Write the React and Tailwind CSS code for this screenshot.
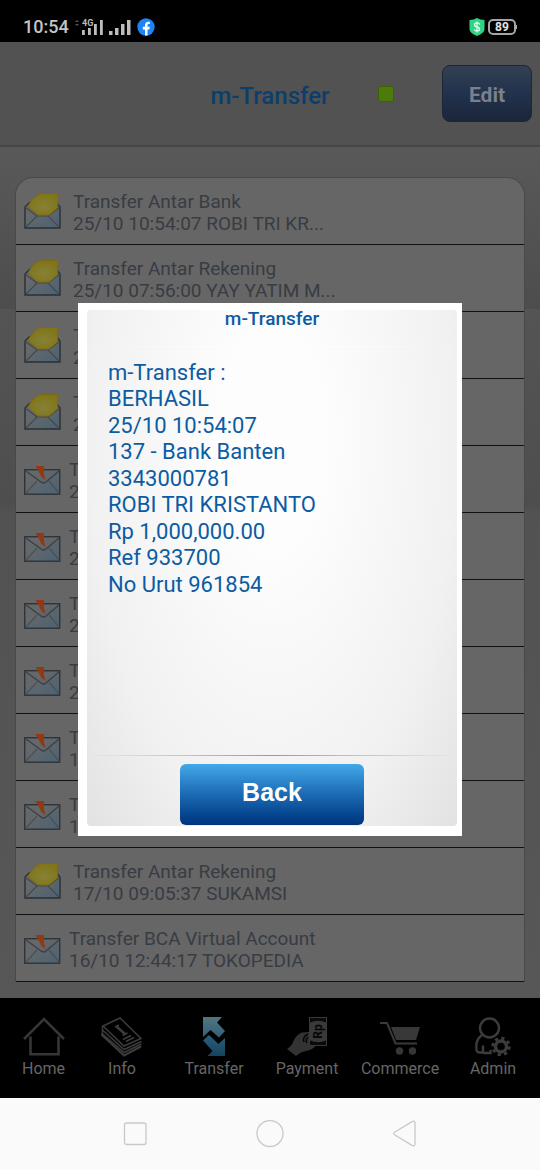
import clsx from 'clsx'

const TRANSACTIONS = [
  { id: 1, opened: true, title: 'Transfer Antar Bank', detail: '25/10 10:54:07 ROBI TRI KR...' },
  { id: 2, opened: true, title: 'Transfer Antar Rekening', detail: '25/10 07:56:00 YAY YATIM M...' },
  { id: 3, opened: true, title: 'Tr', detail: '24' },
  { id: 4, opened: true, title: 'Tr', detail: '23' },
  { id: 5, opened: false, title: 'Tr', detail: '22' },
  { id: 6, opened: false, title: 'Tr', detail: '22' },
  { id: 7, opened: false, title: 'Tr', detail: '21' },
  { id: 8, opened: false, title: 'Tr', detail: '20' },
  { id: 9, opened: false, title: 'Tr', detail: '19' },
  { id: 10, opened: false, title: 'Tr', detail: '18' },
  { id: 11, opened: true, title: 'Transfer Antar Rekening', detail: '17/10 09:05:37 SUKAMSI' },
  { id: 12, opened: false, title: 'Transfer BCA Virtual Account', detail: '16/10 12:44:17 TOKOPEDIA' },
]

const RECEIPT = [
  'm-Transfer :',
  'BERHASIL',
  '25/10 10:54:07',
  '137 - Bank Banten',
  '3343000781',
  'ROBI TRI KRISTANTO',
  'Rp 1,000,000.00',
  'Ref 933700',
  'No Urut 961854',
]

const TABS = [
  { label: 'Home', Icon: HomeIcon },
  { label: 'Info', Icon: InfoIcon },
  { label: 'Transfer', Icon: TransferIcon },
  { label: 'Payment', Icon: PaymentIcon },
  { label: 'Commerce', Icon: CommerceIcon },
  { label: 'Admin', Icon: AdminIcon },
]

/* ---- Tab bar icons ---- */

function HomeIcon() {
  return (
    <svg width="42" height="40" viewBox="0 0 42 40" fill="none" stroke="#363636" strokeWidth="2.6">
      <path d="M1 22 21 2l20 20" />
      <path d="M7.5 19.5v17.8h28V19.5" />
    </svg>
  )
}

function InfoIcon() {
  return (
    <svg width="42" height="40" viewBox="0 0 42 40" fill="none" stroke="#3c3c3c" strokeWidth="1.5">
      <path d="M2 9 19 1l21 20.5L23 29z" />
      <path d="M1.500 9v4L23 32.500l17.500-8" />
      <path d="M1.500 13v4L23 35.500l17.500-8.500" />
      <path d="M1 16.500v1.500L23 38.500l17-9" strokeWidth="2" />
      <path d="m15.500 9.500 8.500 7.500" strokeWidth="2.600" />
      <path d="m14 10 4-2M21.500 18.500l5-2.500M22 22.500l8-4M25 24.500l8-4" />
    </svg>
  )
}

function TransferIcon() {
  return (
    <svg width="42" height="40" viewBox="0 0 42 40">
      <defs>
        <linearGradient id="arrows" x1="0" y1="0" x2="0" y2="1">
          <stop offset="0" stopColor="#54757f" />
          <stop offset="1" stopColor="#326078" />
        </linearGradient>
        <linearGradient id="arrowsDown" x1="0" y1="0" x2="0" y2="1">
          <stop offset="0" stopColor="#2a5f7c" />
          <stop offset="1" stopColor="#16435f" />
        </linearGradient>
      </defs>
      <path fill="url(#arrows)" d="M10 0h19l-5 5.500 8 8.500-6 6.500-8.500-7.500-7.500 7z" />
      <path fill="url(#arrowsDown)" d="m10 23.500 6-5.500 9.500 9 6.500-6v18H14.500l5-5z" />
    </svg>
  )
}

function PaymentIcon() {
  return (
    <svg width="42" height="40" viewBox="0 0 42 40">
      <path fill="#333" d="M1 32Q6 29 8 23q3-6 8-7.500L23 15v13.500h7Q26 33 20 34q-6 1-10 5z" />
      <rect x="23.500" y=".5" width="17" height="28" fill="#0a0a0a" stroke="#393939" />
      <path fill="#393939" d="M24 5.500Q32 2 40 5.500v18q-8 3.500-16 0z" />
      <path d="M22 17q-6 3-4 8M22 20q-3 3-1 6" fill="none" stroke="#050505" strokeWidth="1.500" />
      <text
        transform="rotate(-90 32 14.500)"
        x="32"
        y="18.500"
        textAnchor="middle"
        fontFamily="Roboto, sans-serif"
        fontWeight="700"
        fontSize="12"
        fill="#050505"
      >
        Rp
      </text>
    </svg>
  )
}

function CommerceIcon() {
  return (
    <svg width="42" height="40" viewBox="0 0 42 40">
      <path d="M1 6h7l8.500 20.500H38" fill="none" stroke="#3a3a3a" strokeWidth="2" />
      <path d="M12 10h29l-4 13H17z" fill="#383838" />
      <circle cx="20.500" cy="34" r="3.700" fill="#363636" />
      <circle cx="33.500" cy="34" r="3.700" fill="#363636" />
    </svg>
  )
}

function AdminIcon() {
  return (
    <svg width="42" height="40" viewBox="0 0 42 40" fill="none" stroke="#3c3c3c" strokeWidth="2.400">
      <circle cx="17.500" cy="11" r="9.500" />
      <path d="M10 18Q3 23 4.500 33q.5 2.500 3 2.500H11v-7M11 36h7.500v-3" />
      <circle cx="29" cy="29.500" r="5.500" strokeWidth="3.400" />
      <circle cx="29" cy="29.500" r="8.300" strokeWidth="2.800" strokeDasharray="3.260 3.260" />
    </svg>
  )
}

/* ---- List icons ---- */

function OpenMailIcon() {
  return (
    <svg width="37" height="37" viewBox="0 0 37 37" className="shrink-0">
      <defs>
        <linearGradient id="mailOpen" x1="0" y1="0" x2="1" y2="1">
          <stop offset="0.3" stopColor="#65696c" />
          <stop offset="1" stopColor="#4a6272" />
        </linearGradient>
        <radialGradient id="note" cx="0.5" cy="0.6" r="0.6">
          <stop offset="0" stopColor="#878135" />
          <stop offset="1" stopColor="#7f751a" />
        </radialGradient>
      </defs>
      <path d="M1 14 6 9h26l4 5v21H1z" fill="url(#mailOpen)" />
      <path d="M6 9 1 14v21h35V14l-4-5" fill="none" stroke="#2b2f34" strokeWidth="1.400" />
      <path d="m2 34 11-11h11l11 11M1 14l12 9M36 14l-12 9" fill="none" stroke="#44484c" strokeWidth="1.200" />
      <path
        d="M5 11q5-8 11-10.300L34 .7 33.500 15 25 22H14L5 14z"
        fill="url(#note)"
        stroke="#84690a"
        strokeWidth="1"
      />
    </svg>
  )
}

function ClosedMailIcon() {
  return (
    <svg width="37" height="33" viewBox="0 0 37 33" className="shrink-0">
      <defs>
        <linearGradient id="mailClosed" x1="0" y1="0" x2="1" y2="1">
          <stop offset="0.3" stopColor="#65686b" />
          <stop offset="1" stopColor="#4a6272" />
        </linearGradient>
      </defs>
      <rect x=".7" y="6.700" width="35" height="24.500" fill="url(#mailClosed)" stroke="#2f3439" strokeWidth="1.400" />
      <path d="m2 30 11-12M35 30 25 18" stroke="#4b5054" strokeWidth="1.200" />
      <path d="m2 8 15 11q2.500 2 5 0L35 8" fill="none" stroke="#3b4044" strokeWidth="1.400" />
      <path d="M11.500 3H20v8l1.500 6-4-3-3-6z" fill="#933811" />
    </svg>
  )
}

/* ---- Phone chrome ---- */

function StatusBar() {
  return (
    <div className="flex h-[42px] shrink-0 items-center bg-black px-[23px] pt-3 text-[#c4c4c4]">
      <span className="text-lg leading-5 font-medium">10:54</span>
      <svg width="60" height="20" viewBox="0 0 60 20" className="ml-1" fill="#bdbdbd">
        <path d="m2 5 2-2 2 2zM2 7l2 2 2-2z" fill="#555" />
        <text x="9" y="9" fontFamily="Roboto, sans-serif" fontWeight="700" fontSize="9">
          4G
        </text>
        <path d="M9 13h2.800v5H9zM15 11h2.800v7H15zM21 7h2.800v11H21zM27 3h2.800v15H27z" />
        <path d="M36 14h3.500v4H36zM42 11h3.500v7H42zM48 7h3.500v11H48zM54 3h3.500v15H54z" />
      </svg>
      <svg width="18" height="18" viewBox="0 0 18 18" className="ml-1">
        <circle cx="9" cy="9" r="8.700" fill="#1b85f3" />
        <path
          d="M8 17.600v-6.200H5.800V8.800H8V7.200c0-2.300 1.300-3.500 3.300-3.500.8 0 1.500.1 1.500.1V6h-1c-1 0-1.300.6-1.300 1.300v1.500h2.300l-.4 2.600h-1.900v6.200z"
          fill="#fff"
        />
      </svg>
      <svg width="16" height="18" viewBox="0 0 16 18" className="ml-auto">
        <path d="M8 0q3 2 7.500 2v9q0 4-7.500 7Q.5 15 .5 11V2Q5 2 8 0z" fill="#2fd483" />
        <path
          d="M10.800 6.500Q10 5 8 5 5.500 5 5.500 6.800T8 9t2.500 2.200T8 13q-2 0-2.800-1.500M8 3.500v11"
          fill="none"
          stroke="#dffbec"
          strokeWidth="1.300"
        />
      </svg>
      <div className="ml-[3px] flex items-center">
        <span className="flex h-4 w-7 items-center justify-center rounded-[5px] border-2 border-[#a5a5a5] text-xs leading-3 font-bold text-[#e5e5e5]">
          89
        </span>
        <span className="h-1 w-px bg-[#a5a5a5]" />
      </div>
    </div>
  )
}

function SystemNav() {
  return (
    <div className="flex h-[72px] shrink-0 items-center justify-center gap-[106px] bg-[#fafafa]">
      <button type="button" aria-label="Recent apps">
        <svg width="28" height="28" viewBox="0 0 28 28" fill="none" stroke="#c9c9c9" strokeWidth="1.300">
          <rect x="2.500" y="3" width="21.500" height="21.500" rx="2" />
        </svg>
      </button>
      <button type="button" aria-label="Home">
        <svg width="28" height="28" viewBox="0 0 28 28" fill="none" stroke="#c9c9c9" strokeWidth="1.300">
          <circle cx="14" cy="13.500" r="13" />
        </svg>
      </button>
      <button type="button" aria-label="Go back">
        <svg width="28" height="28" viewBox="0 0 28 28" fill="none" stroke="#c9c9c9" strokeWidth="1.300">
          <path d="M4.500 12.200 22 1.600q3-1.300 3 1.700v20.400q0 3-3 1.700L4.500 14.800q-1.800-1.300 0-2.600z" />
        </svg>
      </button>
    </div>
  )
}

/* ---- App sections ---- */

function Header() {
  return (
    <header className="grid h-[105px] shrink-0 grid-cols-[1fr_auto_1fr] items-center border-b-2 border-[#464646] bg-[#525252]">
      <h1 className="col-start-2 pt-1 text-2xl font-medium text-[#0b3e6c]">m-Transfer</h1>
      <div className="flex items-center justify-between pr-2 pl-12">
        <span className="size-4 rounded-xs border border-[#3f5f08] bg-[#4e7a0c]" />
        <button
          type="button"
          className="h-[57px] w-[90px] rounded-lg border border-[#1b2638] bg-linear-to-b from-[#333f52] via-[#22324d] to-[#1a263a] pt-1 text-[21px] font-bold text-[#7b818b]"
        >
          Edit
        </button>
      </div>
    </header>
  )
}

function TransactionList() {
  return (
    <main className="flex-1 bg-[linear-gradient(to_bottom,#595959,#4d4d4d_19%,#545454_19%,#4e4e4e_42%,#525252_43%,#575757)] px-[15px] pt-[30px] pb-4">
      <ul className="overflow-hidden rounded-t-[18px] border-x border-t border-[#494949] bg-[#666]">
        {TRANSACTIONS.map((item) => (
          <li
            key={item.id}
            className={clsx(
              'flex h-[67px] items-center border-b border-[#111] pl-2 text-[19px] leading-[22px] text-[#383c43]',
              item.opened ? 'gap-3' : 'gap-2',
            )}
          >
            {item.opened ? <OpenMailIcon /> : <ClosedMailIcon />}
            <div className="pt-[3px]">
              <p>{item.title}</p>
              <p>{item.detail}</p>
            </div>
          </li>
        ))}
      </ul>
    </main>
  )
}

function TabBar() {
  return (
    <nav className="grid h-[100px] shrink-0 grid-cols-[87fr_70fr_114fr_72fr_114fr_72fr] bg-black pt-[19px] pr-[11px]">
      {TABS.map(({ label, Icon }) => (
        <a key={label} href="#" className="flex flex-col items-center text-base text-[#666]">
          <Icon />
          {label}
        </a>
      ))}
    </nav>
  )
}

function ReceiptDialog() {
  return (
    <div className="absolute inset-0 flex items-center justify-center pb-0.5">
      <section
        role="dialog"
        aria-labelledby="receipt-title"
        className="w-full max-w-96 bg-white pt-[7px] pr-[5px] pb-[10px] pl-[9px]"
      >
        <div className="flex min-h-[516px] flex-col rounded-sm bg-[radial-gradient(ellipse_at_50%_25%,#fdfdfd_20%,#f1f1f1_70%,#e2e2e2)]">
          <h2 id="receipt-title" className="text-center text-[19px] leading-[18px] font-medium text-[#0b5ca3]">
            m-Transfer
          </h2>
          <div className="mt-[18px] h-px bg-linear-to-r from-transparent via-white to-transparent" />
          <div className="mt-[13px] flex h-[238px] flex-col justify-between pl-[21px] text-[22px] leading-[26px] text-[#0b5ca3]">
            {RECEIPT.map((line) => (
              <p key={line}>{line}</p>
            ))}
          </div>
          <div className="mt-auto h-px bg-linear-to-r from-transparent via-[#8b9bb5] to-transparent" />
          <button
            type="button"
            className="mx-auto mt-2 mb-px h-[61px] w-[184px] rounded-md bg-linear-to-b from-[#43a9e8] via-[#1c6ab4] to-[#00337d] pb-0.5 font-['Liberation_Sans',sans-serif] text-[25px] font-bold text-white"
          >
            Back
          </button>
        </div>
      </section>
    </div>
  )
}

export default function App() {
  return (
    <div className="flex min-h-screen flex-col font-[Roboto,sans-serif]">
      <StatusBar />
      <div className="relative flex flex-1 flex-col">
        <Header />
        <TransactionList />
        <TabBar />
        <ReceiptDialog />
      </div>
      <SystemNav />
    </div>
  )
}
